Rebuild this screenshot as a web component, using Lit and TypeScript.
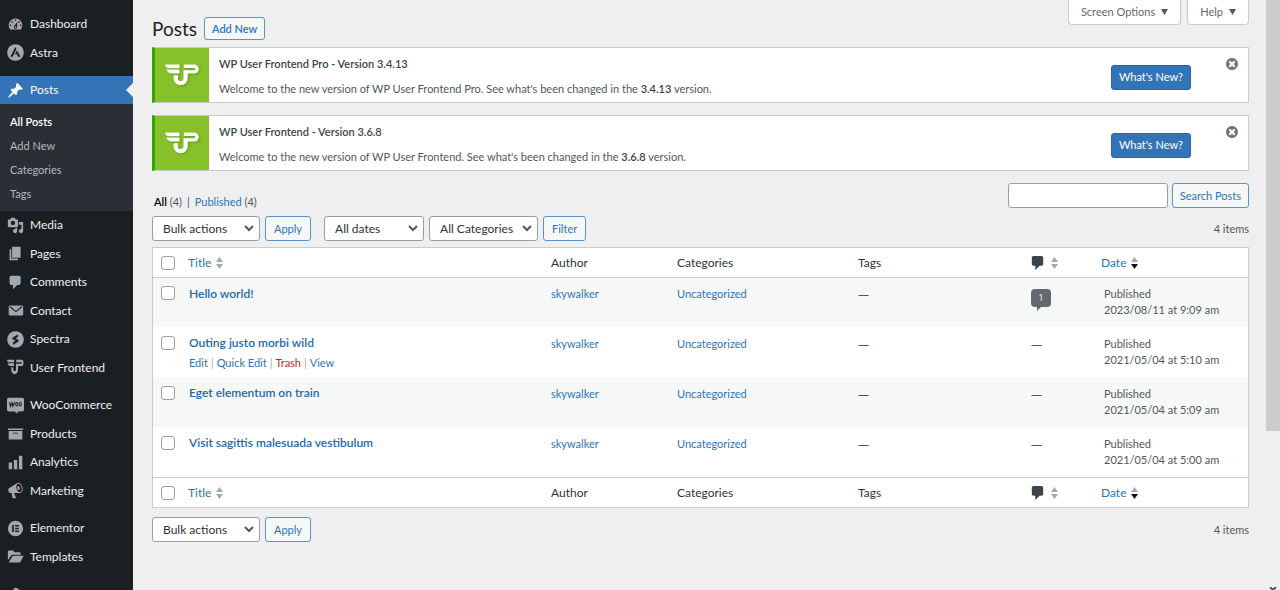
import { LitElement, html, css, svg, nothing } from "lit";
import { customElement, property } from "lit/decorators.js";
import { classMap } from "lit/directives/class-map.js";

const COMMENT = "M5 2h9c1.1 0 2 .9 2 2v7c0 1.1-.9 2-2 2h-2l-5 5v-5H5c-1.1 0-2-.9-2-2V4c0-1.1.9-2 2-2z";

const upMark = svg`
  <path d="M0 0H44V11H8Q2 9 0 0zM4 15H44V27H18Q8 26 4 15z" />
  <path d="M57 0H89a13.500 13.500 0 0 1 0 27H69V41a21.500 21.500 0 0 1-43 0V32H39V41a8.500 8.500 0 0 0 17 0V17H88a3.500 3.500 0 0 0 0-7H57z" />`;

const icons: Record<string, unknown> = {
  dashboard: svg`<path d="M3.760 16h12.480c1.100-1.370 1.760-3.110 1.760-5 0-4.420-3.580-8-8-8s-8 3.580-8 8c0 1.890.66 3.630 1.760 5zM10 4c.55 0 1 .45 1 1s-.45 1-1 1-1-.45-1-1 .45-1 1-1zM6 6c.55 0 1 .45 1 1s-.45 1-1 1-1-.45-1-1 .45-1 1-1zm8 0c.55 0 1 .45 1 1s-.45 1-1 1-1-.45-1-1 .45-1 1-1zm-5.370 5.550L12 7v6c0 1.100-.9 2-2 2s-2-.9-2-2c0-.57.24-1.080.63-1.450zM4 10c.55 0 1 .45 1 1s-.45 1-1 1-1-.45-1-1 .45-1 1-1zm12 0c.55 0 1 .45 1 1s-.45 1-1 1-1-.45-1-1 .45-1 1-1zm-5 3c0-.55-.45-1-1-1s-1 .45-1 1 .45 1 1 1 1-.45 1-1z"/>`,
  astra: svg`<circle cx="10" cy="10" r="9.800"/><path fill="#1a1f23" d="M9.800 3.500L4 15h2.600l4.500-9zM11.700 7.500L9.300 12h2.400l1.300 3H16z"/>`,
  post: svg`<path d="M10.440 3.020l1.820-1.820 6.360 6.350-1.830 1.820c-1.050-.68-2.480-.57-3.410.36l-.75.75c-.92.93-1.040 2.350-.35 3.410l-1.830 1.820-2.410-2.410-2.800 2.790c-.42.42-3.380 2.710-3.800 2.290s1.860-3.390 2.280-3.810l2.790-2.790L4.100 9.360l1.830-1.820c1.050.69 2.480.57 3.400-.36l.75-.75c.93-.92 1.050-2.350.36-3.410z"/>`,
  media: svg`<path d="M13 11V4c0-.55-.45-1-1-1h-1.670L9 1H5L3.670 3H2c-.55 0-1 .45-1 1v7c0 .55.45 1 1 1h10c.55 0 1-.45 1-1zM7 4.500c1.380 0 2.500 1.120 2.500 2.500S8.380 9.500 7 9.500 4.500 8.380 4.500 7 5.620 4.500 7 4.500zM14 6h5v10.500c0 1.380-1.120 2.500-2.500 2.500S14 17.880 14 16.500s1.120-2.500 2.500-2.500c.17 0 .34.02.5.050V9h-3V6zm-4 8.050V13h2v3.500c0 1.380-1.120 2.500-2.500 2.500S7 17.880 7 16.500 8.120 14 9.500 14c.17 0 .34.02.5.050z"/>`,
  pages: svg`<path d="M6 15V2h10v13H6zm-1 1h8v2H3V5h2v11z"/>`,
  comments: svg`<path d=${COMMENT} />`,
  contact: svg`<path d="M3.500 4h14q1.500 0 1.500 1.500v9q0 1.500-1.500 1.500h-14Q2 16 2 14.500v-9Q2 4 3.500 4z"/><path d="M3.500 5.600L10.500 11.300L17.500 5.600" fill="none" stroke="#1a1f23" stroke-width="1.400"/>`,
  spectra: svg`<circle cx="10" cy="10" r="9.800"/><path fill="#1a1f23" d="M12.800 4v3.200L9.800 8.700l3.200 1.400q1.600 1 .4 2.300L7.200 16.500V13.200l3-1.900-3.200-1.400q-1.400-.9-.3-2.200z"/>`,
  user: svg`<g transform="translate(0 1) scale(.19 .27)">${upMark}</g>`,
  woo: svg`<path d="M2 1h16q2 0 2 2v12q0 2-2 2h-6l1 3-4-3H2q-2 0-2-2V3q0-2 2-2z"/><path d="M3 6l1 5 2-4 1 4 2-5" fill="none" stroke="#1a1f23" stroke-width="1.300"/><ellipse cx="11.500" cy="8.500" rx="1.300" ry="2" fill="none" stroke="#1a1f23" stroke-width="1.200"/><ellipse cx="15.500" cy="8.500" rx="1.300" ry="2" fill="none" stroke="#1a1f23" stroke-width="1.200"/>`,
  products: svg`<path d="M19 4v2H1V4h18zM2 7h16v10H2V7zm11 3V9H7v1h6z"/>`,
  analytics: svg`<path d="M18 18V2h-4v16h4zm-6 0V7H8v11h4zm-6 0v-8H2v8h4z"/>`,
  marketing: svg`<path fill-rule="evenodd" d="M18.150 5.940c.46 1.620.38 3.220-.02 4.480-.42 1.280-1.260 2.180-2.300 2.480-.16.06-.26.06-.4.06-.06.02-.12.02-.18.02-.06.02-.14.02-.22.02h-6.800l2.220 5.500c.02.14-.06.26-.14.34-.08.1-.24.16-.34.16H6.950c-.1 0-.26-.06-.34-.16-.08-.08-.16-.2-.14-.34l-1-5.500H4.250l-.02-.02c-.5.06-1.080-.18-1.540-.62s-.88-1.080-1.060-1.880c-.24-.8-.2-1.560-.02-2.200.18-.62.58-1.080 1.060-1.300l.02-.02 9-5.400c.1-.06.18-.1.24-.16.06-.04.14-.08.24-.12.16-.08.28-.12.5-.18 1.040-.3 2.240.1 3.220.98s1.840 2.240 2.260 3.860zm-2.580 5.980h-.02c.4-.1.74-.34 1.040-.7.58-.7.86-1.760.86-3.040 0-.64-.1-1.300-.28-1.980-.34-1.360-1.020-2.500-1.780-3.240s-1.680-1.100-2.460-.88c-.82.22-1.400.96-1.700 2-.32 1.040-.28 2.360.06 3.720.38 1.360 1 2.500 1.800 3.240.78.74 1.620 1.100 2.480.88zm-2.540-7.080c.22-.04.42-.02.62.04.38.16.76.48 1.020 1s.42 1.200.42 1.780c0 .3-.04.56-.12.8-.18.48-.44.84-.86.94-.34.1-.8-.06-1.140-.4s-.64-.86-.78-1.500c-.18-.62-.12-1.240.02-1.720s.48-.84.82-.94z"/>`,
  elementor: svg`<circle cx="10" cy="10" r="9"/><path fill="#1a1f23" d="M6 6h2v8H6zM9.500 6H14v1.700H9.500zM9.500 9.200H14v1.700H9.500zM9.500 12.300H14V14H9.500z"/>`,
  templates: svg`<path d="M1 4q0-1 1-1h5l2 2h6q1 0 1 1v2H6.500q-1.200 0-1.800 1L1 14.500zM6.800 9H19.500L16 16.200q-.4.8-1.400.8H2z"/>`,
  appearance: svg`<path d="M14.480 11.060L7.410 3.990l1.500-1.500c.5-.56 2.300-.47 3.510.32 1.210.8 1.430 1.280 2.910 2.100 1.180.64 2.450 1.260 4.450.85zm-.71.71L6.700 4.700 4.930 6.470c-.39.39-.39 1.020 0 1.410l1.060 1.060c.39.39.39 1.030 0 1.420-.6.6-1.430 1.110-2.210 1.690-.35.26-.7.53-1.010.84-1.430 1.430-1.640 3.450-.71 4.380s2.950.72 4.380-.71c.31-.31.58-.66.85-1.020.57-.78 1.080-1.610 1.690-2.210.39-.39 1.020-.39 1.410 0l1.060 1.060c.39.39 1.020.39 1.410 0z"/>`,
};

const menuGroups = [
  [["dashboard", "Dashboard"], ["astra", "Astra"]],
  [["post", "Posts"]],
  [["media", "Media"], ["pages", "Pages"], ["comments", "Comments"], ["contact", "Contact"], ["spectra", "Spectra"], ["user", "User Frontend"]],
  [["woo", "WooCommerce"], ["products", "Products"], ["analytics", "Analytics"], ["marketing", "Marketing"]],
  [["elementor", "Elementor"], ["templates", "Templates"]],
  [["appearance", ""]],
];

const posts = [
  { title: "Hello world!", date: "2023/08/11 at 9:09 am", comments: 1, actions: false },
  { title: "Outing justo morbi wild", date: "2021/05/04 at 5:10 am", comments: 0, actions: true },
  { title: "Eget elementum on train", date: "2021/05/04 at 5:09 am", comments: 0, actions: false },
  { title: "Visit sagittis malesuada vestibulum", date: "2021/05/04 at 5:00 am", comments: 0, actions: false },
];

const shared = css`
  * { box-sizing: border-box; }
  a { color: #2e74b8; text-decoration: none; }
  button, input, select { font: inherit; margin: 0; }
  ul { list-style: none; margin: 0; padding: 0; }
`;

@customElement("admin-menu")
class AdminMenu extends LitElement {
  static styles = [shared, css`
    :host { display: block; background: #1a1f23; overflow: hidden; padding-top: 10px; }
    .group { margin-bottom: 9px; }
    .group.current { margin-bottom: 0; }
    .item:nth-child(even) .link { height: 29px; }
    .link { display: flex; align-items: center; gap: 6px; height: 28px; padding-left: 7px; color: #eeeff0; font-size: 12px; white-space: nowrap; }
    .icon { width: 17px; height: 17px; fill: #a3a8ad; flex: none; }
    .current .link { background: #3374b6; color: #fff; position: relative; }
    .current .icon { fill: #fff; }
    .current .link::after { content: ""; position: absolute; right: 0; border: 7px solid transparent; border-right-color: #efefef; border-left: 0; }
    .submenu { background: #292f34; padding: 6px 0 5px; }
    .sub { display: block; height: 24px; line-height: 24px; padding-left: 10px; font-size: 11px; color: #b5b9bd; }
    .sub.active { color: #fff; font-weight: 600; }
  `];
  render() {
    return html`<nav aria-label="Main menu">
      ${menuGroups.map((group) => {
        const current = group[0][1] === "Posts";
        return html`<ul class=${classMap({ group: true, current })}>
          ${group.map(([icon, label]) => html`<li class="item">
            <a class="link" href="#"><svg class="icon" viewBox="0 0 20 20" aria-hidden="true">${icons[icon]}</svg>${label}</a>
            ${current ? html`<ul class="submenu">
              ${["All Posts", "Add New", "Categories", "Tags"].map((s, i) => html`<li><a class=${classMap({ sub: true, active: i === 0 })} href="#">${s}</a></li>`)}
            </ul>` : nothing}
          </li>`)}
        </ul>`;
      })}
    </nav>`;
  }
}

@customElement("update-notice")
class UpdateNotice extends LitElement {
  @property() product = "";
  @property() version = "";
  static styles = [shared, css`
    :host { display: block; }
    .notice { display: flex; background: #fff; border: 1px solid #c9cbcd; border-left: 3px solid #36a30a; height: 56px; }
    .logo { width: 54px; background: #86c12a; display: flex; align-items: center; justify-content: center; }
    .mark { width: 34px; height: 22px; fill: #fff; filter: drop-shadow(1px 1px 1px #5f9a18); overflow: visible; }
    .copy { flex: 1; display: flex; flex-direction: column; justify-content: center; gap: 9px; padding: 2px 0 0 10px; line-height: 16px; }
    .title { margin: 0; font-size: 11px; font-weight: 600; color: #3c434a; }
    .text { margin: 0; }
    .more { align-self: center; height: 25px; padding: 0 7px; border: 1px solid #2069ad; border-radius: 3px; background: #3374b6; color: #fff; margin-top: 4px; }
    .close { align-self: flex-start; width: 12px; height: 12px; padding: 0; border: 0; background: none; margin: 10px 10px 0 35px; display: flex; }
    .x { width: 12px; height: 12px; fill: #73777b; }
  `];
  render() {
    return html`<section class="notice">
      <div class="logo"><svg class="mark" viewBox="0 0 103 63" aria-hidden="true">${upMark}</svg></div>
      <div class="copy">
        <h2 class="title">${this.product} - Version ${this.version}</h2>
        <p class="text">Welcome to the new version of ${this.product}. See what's been changed in the <strong class="title">${this.version}</strong> version.</p>
      </div>
      <button class="more">What's New?</button>
      <button class="close" aria-label="Dismiss"><svg class="x" viewBox="2 2 16 16"><path d="M10 2c4.420 0 8 3.580 8 8s-3.580 8-8 8-8-3.580-8-8 3.580-8 8-8zm4.500 10.500L12 10l2.500-2.500-2-2L10 8 7.500 5.500l-2 2L8 10l-2.500 2.500 2 2L10 12l2.500 2.500z"/></svg></button>
    </section>`;
  }
}

@customElement("posts-table")
class PostsTable extends LitElement {
  static styles = [shared, css`
    :host { display: block; border: 1px solid #c9cbcd; background: #fff; }
    .table { width: 100%; border-collapse: separate; border-spacing: 0; table-layout: fixed; }
    .c-check { width: 28px; }
    .c-author { width: 126px; }
    .c-cats { width: 181px; }
    .c-tags { width: 173px; }
    .c-comments { width: 73px; }
    .c-date { width: 154px; }
    .head { padding: 0 10px; height: 29px; text-align: left; font-weight: 400; font-size: 12px; color: #2c3338; }
    .foot .head { height: 30px; border-top: 1px solid #c9cbcd; }
    .head.sort { padding: 0 7px; }
    .head.bubble { padding: 0 10px; }
    .head.check, .cell.check { padding: 0 0 0 8px; }
    .sorter { display: flex; align-items: center; gap: 5px; }
    .arrows { width: 7px; height: 12px; fill: #a4a7ab; }
    .arrows .on { fill: #111; }
    .talk { width: 13px; height: 14px; fill: #3c434a; margin-right: 2px; }
    .cell { height: 50px; padding: 9px 10px 0; vertical-align: top; line-height: 16px; }
    .cell.title-cell { padding: 8px 8px 0; }
    .row:nth-child(odd) .cell { background: #f6f7f7; }
    .row:first-child .cell { border-top: 1px solid #c9cbcd; padding-top: 8px; }
    .cell.check { padding-top: 9px; }
    .row .title { display: block; font-size: 12px; font-weight: 600; color: #2368ad; }
    .actions { display: flex; gap: 3px; margin-top: 4px; color: #a7aaad; }
    .trash { color: #b32d2e; }
    .dash { font-family: "Open Sans", sans-serif; }
    .box { appearance: none; display: block; width: 14px; height: 14px; border: 1px solid #9a9da1; border-radius: 3px; background: #fff; }
    .count { display: grid; position: relative; width: 20px; height: 18px; place-items: center; margin-top: 3px; border-radius: 4px; background: #646970; color: #fff; font-size: 9px; line-height: 12px; }
    .count::after { content: ""; position: absolute; left: 6px; top: 18px; border-top: 4px solid #646970; border-right: 4px solid transparent; }
  `];
  private arrows(down = false) {
    return html`<svg class="arrows" viewBox="0 0 7 12" aria-hidden="true"><path d="M0 5L3.500 0L7 5z"/><path class=${down ? "on" : ""} d="M0 7H7L3.500 12z"/></svg>`;
  }
  private heads(where: string) {
    return html`<tr>
      <th class="head check"><input class="box" type="checkbox" aria-label="Select all (${where})"></th>
      <th class="head sort"><a class="sorter" href="#">Title ${this.arrows()}</a></th>
      <th class="head">Author</th><th class="head">Categories</th><th class="head">Tags</th>
      <th class="head bubble"><a class="sorter" href="#" aria-label="Comments"><svg class="talk" viewBox="3 2 13 16"><path d=${COMMENT} /></svg>${this.arrows()}</a></th>
      <th class="head sort"><a class="sorter" href="#">Date ${this.arrows(true)}</a></th>
    </tr>`;
  }
  render() {
    return html`<table class="table">
      <colgroup><col class="c-check"><col><col class="c-author"><col class="c-cats"><col class="c-tags"><col class="c-comments"><col class="c-date"></colgroup>
      <thead>${this.heads("top")}</thead>
      <tbody>${posts.map((p) => html`<tr class="row">
        <td class="cell check"><input class="box" type="checkbox" aria-label="Select ${p.title}"></td>
        <td class="cell title-cell"><a class="title" href="#">${p.title}</a>
          ${p.actions ? html`<div class="actions"><a href="#">Edit</a>|<a href="#">Quick Edit</a>|<a class="trash" href="#">Trash</a>|<a href="#">View</a></div>` : nothing}</td>
        <td class="cell"><a href="#">skywalker</a></td>
        <td class="cell"><a href="#">Uncategorized</a></td>
        <td class="cell dash">—</td>
        <td class="cell dash">${p.comments ? html`<a class="count" href="#">${p.comments}</a>` : "—"}</td>
        <td class="cell">Published<br>${p.date}</td>
      </tr>`)}</tbody>
      <tfoot class="foot">${this.heads("bottom")}</tfoot>
    </table>`;
  }
}

@customElement("app-root")
class AppRoot extends LitElement {
  static styles = [shared, css`
    :host { display: grid; grid-template-columns: 133px 1fr 14px; height: 100vh; overflow: hidden; background: #efefef; color: #50575e; font: 11px/16px Lato, "Open Sans", sans-serif; }
    .main { padding: 0 17px 0 19px; min-width: 0; }
    .top { display: flex; justify-content: space-between; height: 47px; }
    .heading { display: flex; align-items: center; gap: 7px; padding-top: 10px; }
    .h1 { margin: 0; font-size: 19px; line-height: 24px; font-weight: 400; color: #1d2327; }
    .add { border: 1px solid #5b93c9; border-radius: 3px; background: #f6f7f7; height: 23px; line-height: 22px; padding: 0 7px; font-weight: 600; }
    .tabs { display: flex; gap: 6px; align-items: flex-start; }
    .tab { display: flex; align-items: center; gap: 6px; height: 25px; padding: 0 12px; border: 1px solid #c9cbcd; border-top: 0; border-radius: 0 0 4px 4px; background: #fff; color: #646970; }
    .caret { width: 7px; height: 6px; fill: #50575e; }
    .notices { display: grid; gap: 12px; }
    .bar { display: flex; align-items: center; justify-content: space-between; }
    .views { margin-top: 12px; height: 25px; }
    .links { display: flex; gap: 5px; padding: 12px 0 0 2px; }
    .all { font-weight: 600; color: #000; }
    .search { display: flex; gap: 4px; }
    .query { width: 160px; height: 25px; border: 1px solid #9a9da1; border-radius: 3px; background: #fff; padding: 0 6px; }
    .btn { height: 25px; border: 1px solid #5b93c9; border-radius: 3px; background: #f6f7f7; color: #2e74b8; padding: 0 8px; }
    .search .btn { padding: 0 7px; }
    .filters { margin: 8px 0 6px; height: 25px; }
    .filters.bottom { margin-top: 9px; }
    .controls { display: flex; gap: 5px; }
    .bulk { width: 108px; }
    .dates { width: 100px; margin-left: 8px; }
    .cats { width: 109px; }
    .pick { position: relative; display: block; }
    .select { appearance: none; width: 100%; height: 25px; border: 1px solid #9a9da1; border-radius: 3px; background: #fff; color: #2c3338; font-size: 12px; padding: 0 20px 0 10px; }
    .chev { position: absolute; right: 6px; top: 8px; width: 10px; height: 8px; fill: none; stroke: #50575e; stroke-width: 2; pointer-events: none; }
    .track { display: flex; flex-direction: column; justify-content: space-between; align-items: center; background: #efefef; overflow: hidden; }
    .thumb { width: 100%; height: 73%; background: #cdcdcd; flex: none; }
    .end { width: 8px; height: 3px; fill: none; stroke: #50575e; stroke-width: 2; }
  `];
  private pick(cls: string, label: string) {
    return html`<label class="pick ${cls}"><select class="select" aria-label=${label}><option>${label}</option></select>
      <svg class="chev" viewBox="0 0 10 8" aria-hidden="true"><path d="M1 2L5 6L9 2"/></svg></label>`;
  }
  private tab(label: string) {
    return html`<button class="tab">${label}<svg class="caret" viewBox="0 0 7 6" aria-hidden="true"><path d="M0 0H7L3.500 6z"/></svg></button>`;
  }
  render() {
    return html`
      <admin-menu></admin-menu>
      <main class="main">
        <header class="top">
          <div class="heading"><h1 class="h1">Posts</h1><a class="add" href="#">Add New</a></div>
          <div class="tabs">${this.tab("Screen Options")}${this.tab("Help")}</div>
        </header>
        <div class="notices">
          <update-notice product="WP User Frontend Pro" version="3.4.13"></update-notice>
          <update-notice product="WP User Frontend" version="3.6.8"></update-notice>
        </div>
        <div class="bar views">
          <div class="links"><span><a class="all" href="#">All</a> (4)</span><span>|</span><span><a href="#">Published</a> (4)</span></div>
          <form class="search"><input class="query" type="search" aria-label="Search Posts"><button class="btn" type="button">Search Posts</button></form>
        </div>
        <div class="bar filters">
          <div class="controls">${this.pick("bulk", "Bulk actions")}<button class="btn">Apply</button>${this.pick("dates", "All dates")}${this.pick("cats", "All Categories")}<button class="btn">Filter</button></div>
          <span>4 items</span>
        </div>
        <posts-table></posts-table>
        <div class="bar filters bottom">
          <div class="controls">${this.pick("bulk", "Bulk actions")}<button class="btn">Apply</button></div>
          <span>4 items</span>
        </div>
      </main>
      <div class="track" aria-hidden="true"><div class="thumb"></div><svg class="end" viewBox="0 0 8 3"><path d="M1 0L4 3L7 0"/></svg></div>`;
  }
}
